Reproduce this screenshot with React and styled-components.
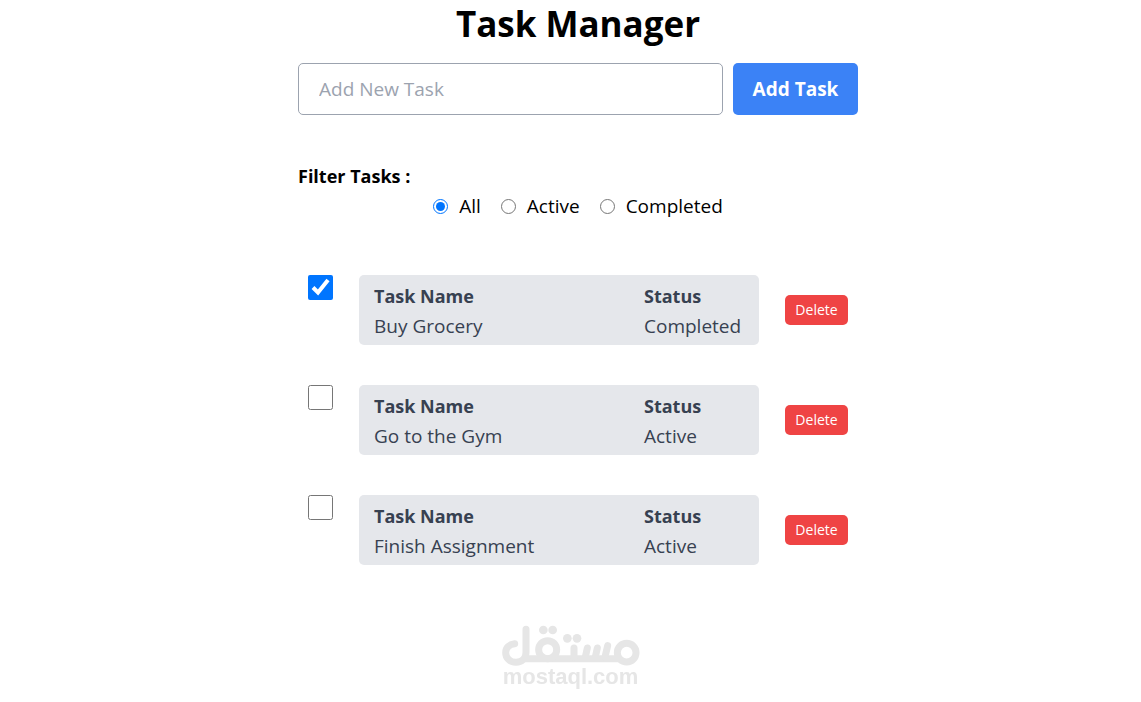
import React, { useState } from "react";
import styled, { createGlobalStyle } from "styled-components";

const GlobalStyle = createGlobalStyle`
  *,
  *::before,
  *::after {
    box-sizing: border-box;
  }

  body {
    margin: 0;
    background-color: white;
    color: black;
    font-family: "Segoe UI", "Open Sans", "Noto Sans", sans-serif;
    font-size: 19px;
    line-height: 30px;
  }

  input,
  button {
    font: inherit;
    margin: 0;
  }
`;

const Container = styled.main`
  padding: 0 0 0 15px;
`;

const Wrapper = styled.div`
  width: 100%;
  max-width: 560px;
  margin: 0 auto;
`;

const Title = styled.h1`
  margin: 0 0 15px;
  font-size: 35px;
  font-weight: 700;
  line-height: 48px;
  text-align: center;
`;

const Form = styled.form`
  display: flex;
  gap: 10px;
`;

const Input = styled.input`
  flex: 1;
  min-width: 0;
  padding: 10px 20px;
  border: 1px solid #9ca3af;
  border-radius: 5px;

  &::placeholder {
    color: #9ca3af;
    opacity: 1;
  }
`;

const AddButton = styled.button`
  width: 125px;
  border: none;
  border-radius: 5px;
  background-color: #3b82f6;
  color: white;
  font-size: 19px;
  font-weight: 700;
  cursor: pointer;
`;

const Filter = styled.fieldset`
  margin: 46px 0 54px;
  padding: 0;
  border: none;
`;

const FilterTitle = styled.legend`
  padding: 0;
  font-size: 18px;
  font-weight: 700;
`;

const FilterOptions = styled.div`
  display: flex;
  justify-content: center;
  gap: 20px;
`;

const FilterLabel = styled.label`
  display: flex;
  align-items: center;
  gap: 11px;
`;

const Radio = styled.input`
  width: 15px;
  height: 15px;
  accent-color: #0075ff;
`;

const TaskList = styled.ul`
  display: flex;
  flex-direction: column;
  gap: 40px;
  margin: 0;
  padding: 0;
  list-style: none;
`;

const TaskRow = styled.li`
  display: flex;
  align-items: center;
  justify-content: space-between;
  padding: 0 10px;
`;

const Checkbox = styled.input`
  align-self: flex-start;
  width: 25px;
  height: 25px;
  accent-color: #0075ff;
`;

const TaskCard = styled.div`
  display: grid;
  grid-template-columns: 1fr 100px;
  width: 400px;
  padding: 6px 15px 4px;
  border-radius: 5px;
  background-color: #e5e7eb;
  color: #374151;
`;

const Heading = styled.h2`
  margin: 0;
  font-size: 18px;
  font-weight: 700;
  line-height: 30px;
`;

const Text = styled.p`
  margin: 0;
`;

const DeleteButton = styled.button`
  width: 63px;
  height: 30px;
  padding: 0;
  border: none;
  border-radius: 5px;
  background-color: #ef4444;
  color: white;
  font-size: 14px;
  cursor: pointer;
`;

const Watermark = styled.div`
  position: fixed;
  left: 0;
  right: 0;
  bottom: 15px;
  display: flex;
  flex-direction: column;
  align-items: center;
  color: #e6e6e6;
  font-family: "Liberation Sans", Arial, sans-serif;
  font-size: 22px;
  font-weight: 700;
  line-height: 20px;
  pointer-events: none;
`;

const filters = ["All", "Active", "Completed"];

const initialTasks = [
  { id: 1, name: "Buy Grocery", completed: true },
  { id: 2, name: "Go to the Gym", completed: false },
  { id: 3, name: "Finish Assignment", completed: false },
];

const Logo = () => (
  <svg
    width="138"
    height="42"
    viewBox="35 28 414 126"
    fill="none"
    stroke="currentColor"
    strokeWidth="21"
    strokeLinecap="round"
    aria-hidden="true"
  >
    <path d="M107 41V110C107 128 94 140 77 140C59 140 46 127 46 111C46 96 57 86 73 84" />
    <path d="M104 129H392" strokeLinecap="butt" />
    <circle cx="172" cy="102" r="27" />
    <circle cx="409" cy="111" r="28" />
    <path d="M251 97V124M291 97L285 124M321 97L315 124M352 90L344 124" />
    <g fill="currentColor" stroke="none">
      <circle cx="159" cy="43" r="13" />
      <circle cx="187" cy="43" r="13" />
      <circle cx="231" cy="68" r="13" />
      <circle cx="260" cy="68" r="13" />
    </g>
  </svg>
);

const App = () => {
  const [tasks, setTasks] = useState(initialTasks);
  const [filter, setFilter] = useState("All");
  const [name, setName] = useState("");

  function handleSubmit(event) {
    event.preventDefault();
    if (!name.trim()) return;
    setTasks([...tasks, { id: Date.now(), name: name.trim(), completed: false }]);
    setName("");
  }

  function toggleTask(id) {
    setTasks(
      tasks.map((task) =>
        task.id === id ? { ...task, completed: !task.completed } : task
      )
    );
  }

  const visibleTasks = tasks.filter(
    (task) => filter === "All" || task.completed === (filter === "Completed")
  );

  return (
    <>
      <GlobalStyle />
      <Container>
        <Wrapper>
          <Title>Task Manager</Title>
          <Form onSubmit={handleSubmit}>
            <Input
              type="text"
              aria-label="Add New Task"
              placeholder="Add New Task"
              value={name}
              onChange={(e) => setName(e.target.value)}
            />
            <AddButton type="submit">Add Task</AddButton>
          </Form>

          <Filter>
            <FilterTitle>Filter Tasks :</FilterTitle>
            <FilterOptions>
              {filters.map((option) => (
                <FilterLabel key={option}>
                  <Radio
                    type="radio"
                    name="filter"
                    value={option}
                    checked={filter === option}
                    onChange={() => setFilter(option)}
                  />
                  {option}
                </FilterLabel>
              ))}
            </FilterOptions>
          </Filter>

          <TaskList>
            {visibleTasks.map((task) => (
              <TaskRow key={task.id}>
                <Checkbox
                  type="checkbox"
                  aria-label={task.name}
                  checked={task.completed}
                  onChange={() => toggleTask(task.id)}
                />
                <TaskCard>
                  <div>
                    <Heading>Task Name</Heading>
                    <Text>{task.name}</Text>
                  </div>
                  <div>
                    <Heading>Status</Heading>
                    <Text>{task.completed ? "Completed" : "Active"}</Text>
                  </div>
                </TaskCard>
                <DeleteButton
                  type="button"
                  onClick={() => setTasks(tasks.filter((t) => t.id !== task.id))}
                >
                  Delete
                </DeleteButton>
              </TaskRow>
            ))}
          </TaskList>
        </Wrapper>
      </Container>
      <Watermark>
        <Logo />
        mostaql.com
      </Watermark>
    </>
  );
};

export default App;
